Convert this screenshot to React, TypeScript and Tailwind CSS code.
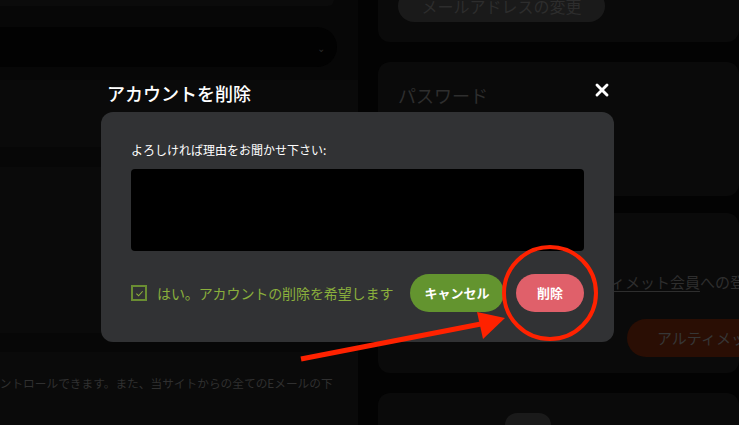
import { X } from 'lucide-react';

const jp = { fontFamily: '"Noto Sans CJK JP", "Noto Sans", sans-serif' };

function Backdrop() {
  return (
    <div className="flex h-full w-full">
      {/* left column */}
      <div className="flex w-[358px] shrink-0 flex-col bg-[#070707]">
        <div className="h-[6px] w-[334px] rounded-br-[14px] bg-[#0b0b0b]" />
        <div className="mt-[21px] flex h-[40px] w-[337px] items-center justify-end rounded-r-full bg-[#020202] pr-[12px]">
          <span className="text-[10px] text-[#2a2a2a]">⌄</span>
        </div>
        <div className="mt-[13px] h-[67px] bg-[#0a0a0a]" />
        <div className="mt-[20px] h-[166px] bg-[#0a0a0a]" />
        <div className="mt-[19px] flex-1 overflow-hidden bg-[#0a0a0a] pt-[22px]">
          <p className="ml-[-12px] whitespace-nowrap text-[11.7px] text-[#303030]">
            コントロールできます。また、当サイトからの全てのEメールの下
          </p>
        </div>
      </div>

      {/* right column */}
      <div className="ml-[20px] flex min-w-0 flex-1 flex-col">
        <div className="h-[43px] rounded-b-[12px] bg-[#0a0a0a] pl-[20px]">
          <div className="mt-[-10px] flex h-[32px] w-[207px] items-center justify-center rounded-full bg-[#1a1a1a] text-[16px] text-[#2d2d2d]">
            メールアドレスの変更
          </div>
        </div>
        <div className="mt-[20px] h-[137px] rounded-[12px] bg-[#0a0a0a] px-[20px] pt-[20px]">
          <p className="text-[18px] text-[#2e2e2e]">パスワード</p>
        </div>
        <div className="mt-[17px] h-[163px] overflow-hidden rounded-[12px] bg-[#0a0a0a] pt-[58px]">
          <p className="ml-[188px] whitespace-nowrap text-[15px] text-[#2e2e2e]">
            <span className="underline underline-offset-[3px]">アルティメット会員</span>への登録
          </p>
          <div className="ml-[249px] mt-[26px] flex h-[38px] w-[200px] items-center whitespace-nowrap rounded-full bg-[#2a0e04] pl-[30px] text-[15px] text-[#363636]">
            アルティメット会員
          </div>
        </div>
        <div className="mt-[20px] flex-1 rounded-t-[12px] bg-[#0a0a0a] pl-[127px] pt-[20px]">
          <div className="h-[12px] w-[46px] rounded-t-full bg-[#1a1a1a]" />
        </div>
      </div>
    </div>
  );
}

function DeleteModal() {
  return (
    <div className="absolute left-[101px] top-[78px] w-[513px]">
      <div className="flex items-center justify-between pl-[6px] pr-[2px]">
        <h2 className="text-[18px] font-medium leading-[30px] text-white">アカウントを削除</h2>
        <X className="mt-[-6px] h-[20px] w-[20px] text-white" strokeWidth={3.5} />
      </div>
      <div className="mt-[4px] rounded-[12px] bg-[#313234] px-[30px] pb-[30px] pt-[29px]">
        <p className="text-[12px] leading-[18px] text-white">よろしければ理由をお聞かせ下さい:</p>
        <div className="mt-[10px] h-[82px] rounded-[4px] bg-black" />
        <div className="mt-[23px] flex items-center">
          <div className="flex flex-1 items-center gap-[10px]">
            <span className="flex h-[16px] w-[16px] items-center justify-center border-2 border-[#6a8d32]">
              <svg viewBox="0 0 10 10" className="h-[9px] w-[9px]">
                <path d="M1.5 5.2 L4 7.5 L8.5 2.5" fill="none" stroke="#8aae3c" strokeWidth="1.2" />
              </svg>
            </span>
            <span className="text-[14px] tracking-[-0.1px] text-[#8aaf3c]">はい。アカウントの削除を希望します</span>
          </div>
          <button className="h-[38px] w-[94px] rounded-full bg-[#63942f] text-[13px] font-bold text-white">
            キャンセル
          </button>
          <button className="ml-[12px] h-[38px] w-[68px] rounded-full bg-[#e0606a] text-[13px] font-bold text-white">
            削除
          </button>
        </div>
      </div>
    </div>
  );
}

function Annotation() {
  return (
    <svg className="pointer-events-none absolute left-0 top-0" width="739" height="425" viewBox="0 0 739 425">
      <ellipse cx="550" cy="293" rx="46" ry="46" fill="none" stroke="#ff2200" strokeWidth="4" />
      <line x1="301" y1="359" x2="486" y2="323" stroke="#ff2200" strokeWidth="5" />
      <polygon points="505,318 477,312 483,339" fill="#ff2200" />
    </svg>
  );
}

export default function App() {
  return (
    <div className="relative h-[425px] w-[739px] overflow-hidden bg-[#030303]" style={jp}>
      <Backdrop />
      <DeleteModal />
      <Annotation />
    </div>
  );
}
